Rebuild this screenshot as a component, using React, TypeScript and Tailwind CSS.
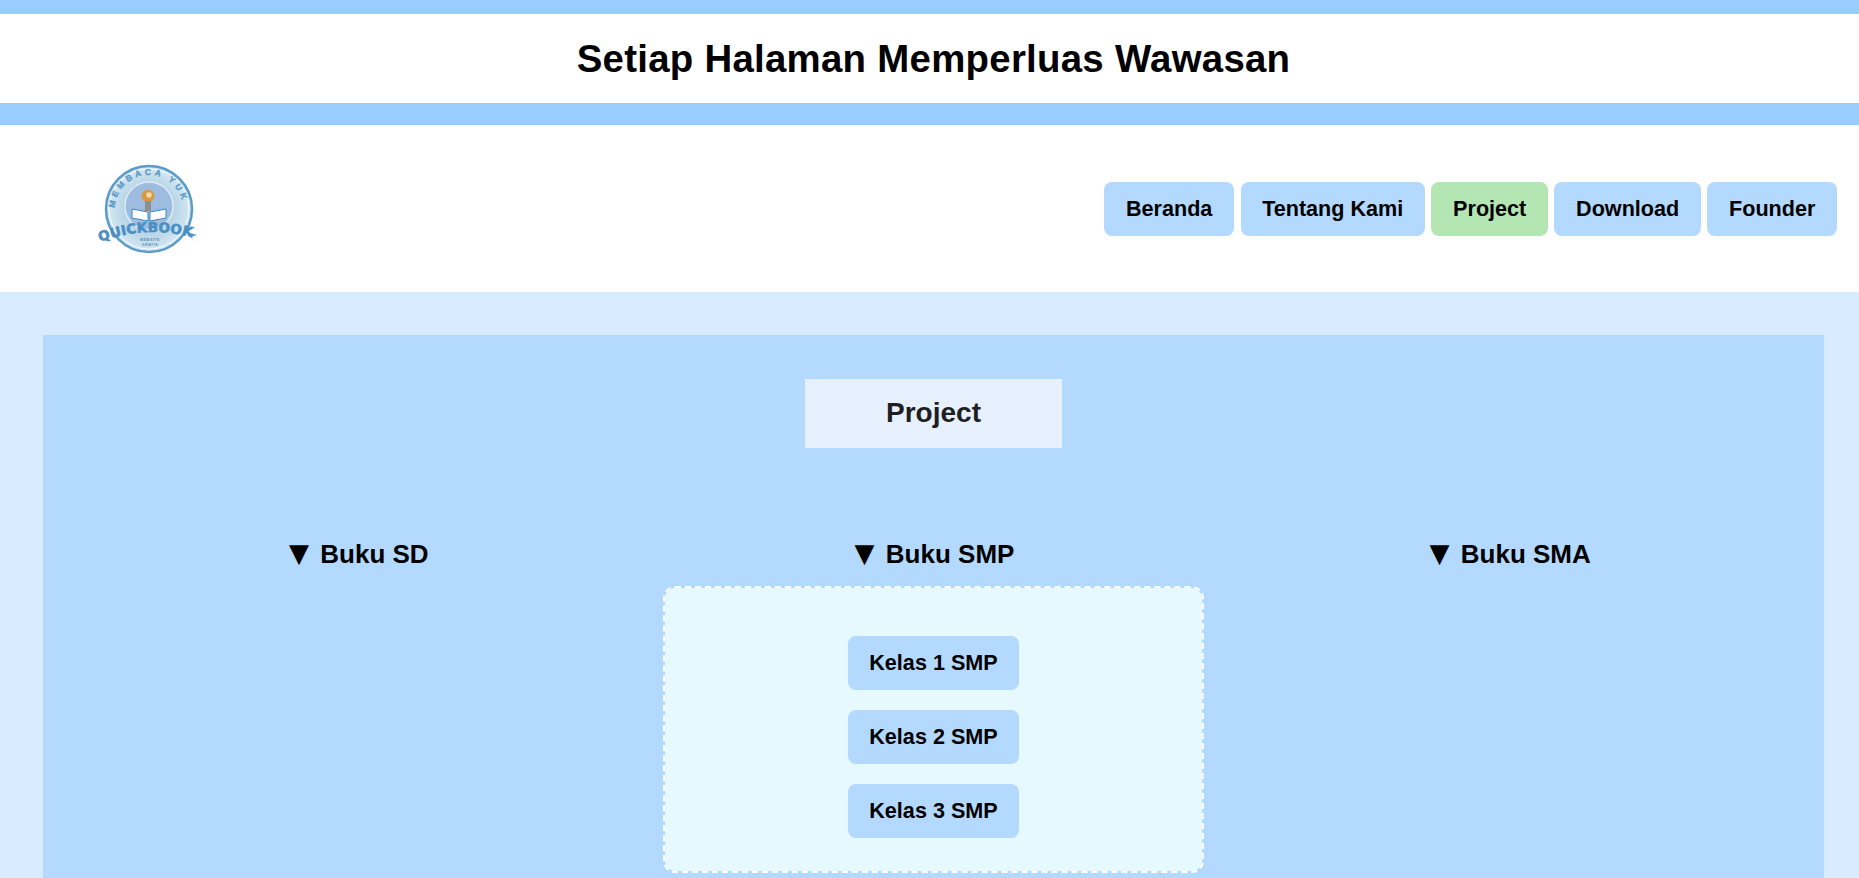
const navItems = ['Beranda', 'Tentang Kami', 'Project', 'Download', 'Founder']
const kelasList = ['Kelas 1 SMP', 'Kelas 2 SMP', 'Kelas 3 SMP']

function Logo() {
  return (
    <svg width="110" height="100" viewBox="0 0 110 100" aria-label="Quickbook">
      <defs>
        <path id="arcTop" d="M 20 50 A 34 34 0 0 1 88 50" />
        <path id="arcWord" d="M 5 83 Q 50 66 96 78" />
        <radialGradient id="logoFill" cx="50%" cy="50%" r="50%">
          <stop offset="60%" stopColor="#b9d6e8" />
          <stop offset="100%" stopColor="#d6e9f2" />
        </radialGradient>
      </defs>
      <circle cx="54" cy="50" r="43" fill="url(#logoFill)" stroke="#5b9bc8" strokeWidth="2.5" />
      <circle cx="54" cy="50" r="40" fill="none" stroke="#ffffff" strokeWidth="0.8" />
      <circle cx="54" cy="47" r="24" fill="#9dbce0" stroke="#dcebf5" strokeWidth="1.5" />
      <text fontFamily="'Liberation Sans', sans-serif" fontSize="8.5" fontWeight="700" fill="#5b9bc8" stroke="#5b9bc8" strokeWidth="0.35" letterSpacing="3.2">
        <textPath href="#arcTop" startOffset="1%">MEMBACA YUK</textPath>
      </text>
      <circle cx="53" cy="37" r="6.5" fill="#d99a45" />
      <circle cx="54" cy="36" r="2.8" fill="#f4d9a0" />
      <rect x="50" y="42" width="6" height="10" fill="#8e8e8e" />
      <path d="M37 50 L53 53 L53 62 L37 59 Z" fill="#ffffff" stroke="#3d86c2" strokeWidth="1" />
      <path d="M71 50 L55 53 L55 62 L71 59 Z" fill="#ffffff" stroke="#3d86c2" strokeWidth="1" />
      <path d="M92 73 L102 76 L96 78 L99 83 Z" fill="#5b9bc8" />
      <text fontFamily="'DejaVu Sans', sans-serif" fontSize="13.5" fontWeight="700" fill="#4a8fc4" stroke="#4a8fc4" strokeWidth="0.6" letterSpacing="0.2">
        <textPath href="#arcWord">QUICKBOOK</textPath>
      </text>
      <text x="55" y="82" textAnchor="middle" fontFamily="'Liberation Sans', sans-serif" fontSize="3.6" fontWeight="700" fill="#5b8fb8" letterSpacing="0.5">WEBSITE</text>
      <text x="55" y="87" textAnchor="middle" fontFamily="'Liberation Sans', sans-serif" fontSize="3.6" fontWeight="700" fill="#5b8fb8" letterSpacing="0.5">GRATIS</text>
    </svg>
  )
}

function BukuColumn({ title, children }: { title: string; children?: React.ReactNode }) {
  return (
    <div className="flex flex-col">
      <h3 className="mb-[17px] pl-[2px] text-center text-[26px] leading-[30px] font-bold text-black">
        <span className="mr-[4px] align-[1px] font-['DejaVu_Sans',sans-serif]">▼</span> {title}
      </h3>
      {children}
    </div>
  )
}

export default function App() {
  return (
    <div className="h-[878px] w-[1859px] overflow-hidden font-['Liberation_Sans',Arial,sans-serif]">
      <div className="w-[1867px]">
        <div className="border-t-[14px] border-b-[22px] border-[#99ccff] bg-white py-[22px] text-center">
          <h1 className="text-[38.4px] leading-[45px] font-bold tracking-[0.27px] text-black">Setiap Halaman Memperluas Wawasan</h1>
        </div>

        <header className="flex h-[167px] items-center justify-between bg-white pr-[30px] pl-[95px]">
          <Logo />
          <nav className="flex gap-[6.6px]">
            {navItems.map((item) => (
              <a
                key={item}
                className={`rounded-lg px-[21.6px] pt-[14px] pb-[15px] text-[21.6px] leading-[25px] font-bold text-black ${
                  item === 'Project' ? 'bg-[#b3e6b3]' : 'bg-[#b3d9ff]'
                }`}
              >
                {item}
              </a>
            ))}
          </nav>
        </header>

        <main className="bg-[#d9ecff] px-[43px] pt-[43px]">
          <section className="bg-[#b3d9ff] px-[44px] pt-[44px] pb-[40px]">
            <div className="flex justify-center">
              <h2 className="bg-[#e6f0ff] px-[81px] pt-[17px] pb-[19px] text-[28px] leading-[33px] font-bold text-[#1f1f1f]">Project</h2>
            </div>
            <div className="mt-[90px] grid grid-cols-3 gap-[34px]">
              <BukuColumn title="Buku SD" />
              <BukuColumn title="Buku SMP">
                <div className="flex flex-col items-center gap-[20px] rounded-xl border-2 border-dashed border-white bg-[#e6f9ff] bg-clip-padding pt-[48px] pb-[33px]">
                  {kelasList.map((kelas) => (
                    <a key={kelas} className="rounded-lg bg-[#b3d9ff] px-[21.6px] pt-[14px] pb-[15px] text-[21.6px] leading-[25px] font-bold text-black">
                      {kelas}
                    </a>
                  ))}
                </div>
              </BukuColumn>
              <BukuColumn title="Buku SMA" />
            </div>
          </section>
        </main>
      </div>
    </div>
  )
}
